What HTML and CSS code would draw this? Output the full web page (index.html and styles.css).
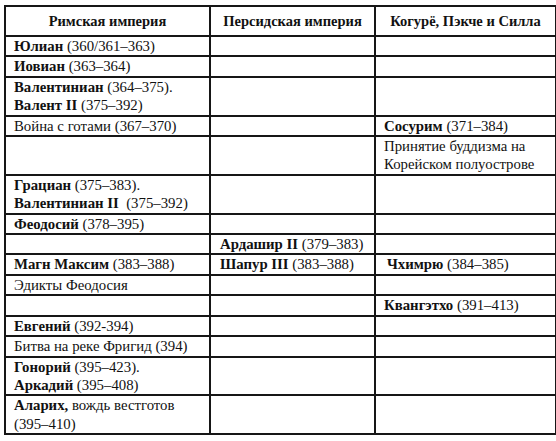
FILE: index.html
```html
<!DOCTYPE html>
<html>
<head>
<meta charset="utf-8">
<link rel="stylesheet" href="styles.css">
</head>
<body>
<table class="chron">
  <colgroup>
    <col class="c1"><col class="c2"><col class="c3">
  </colgroup>
  <thead>
    <tr><th>Римская империя</th><th>Персидская империя</th><th>Когурё, Пэкче и Силла</th></tr>
  </thead>
  <tbody>
    <tr><td><b>Юлиан</b> (360/361–363)</td><td></td><td></td></tr>
    <tr><td><b>Иовиан</b> (363–364)</td><td></td><td></td></tr>
    <tr><td><b>Валентиниан</b> (364–375).<br><b>Валент II</b> (375–392)</td><td></td><td></td></tr>
    <tr><td>Война с готами (367–370)</td><td></td><td class="k"><b>Сосурим</b> (371–384)</td></tr>
    <tr><td></td><td></td><td class="k">Принятие буддизма на<br>Корейском полуострове</td></tr>
    <tr><td><b>Грациан</b> (375–383).<br><b>Валентиниан II</b>&nbsp; (375–392)</td><td></td><td></td></tr>
    <tr><td><b>Феодосий</b> (378–395)</td><td></td><td></td></tr>
    <tr><td></td><td class="p"><b>Ардашир II</b> (379–383)</td><td></td></tr>
    <tr><td><b>Магн Максим</b> (383–388)</td><td class="p"><b>Шапур III</b> (383–388)</td><td class="k ind"><b>Чхимрю</b> (384–385)</td></tr>
    <tr><td>Эдикты Феодосия</td><td></td><td></td></tr>
    <tr><td></td><td></td><td class="k"><b>Квангэтхо</b> (391–413)</td></tr>
    <tr><td><b>Евгений</b> (392-394)</td><td></td><td></td></tr>
    <tr><td>Битва на реке Фригид (394)</td><td></td><td></td></tr>
    <tr><td><b>Гонорий</b> (395–423).<br><b>Аркадий</b> (395–408)</td><td></td><td></td></tr>
    <tr><td><b>Аларих,</b> вождь вестготов<br>(395–410)</td><td></td><td></td></tr>
  </tbody>
</table>
</body>
</html>
```
FILE: styles.css
```css
html, body {
  margin: 0;
  padding: 0;
  background: #fff;
}
body {
  padding: 5px 0 0 4px;
  font-family: "Liberation Serif", "DejaVu Serif", serif;
  color: #111;
}
.chron {
  border-collapse: collapse;
  width: 551px;
  table-layout: fixed;
  font-family: "Liberation Serif", "DejaVu Serif", serif;
  font-size: 14.8px;
}
.c1 { width: 205px; }
.c2 { width: 165px; }
.c3 { width: 181px; }
.chron th, .chron td {
  border: 2px solid #161616;
  padding: 0 8px;
  line-height: 18.4px;
  vertical-align: middle;
  text-align: left;
  font-family: "Liberation Serif", "DejaVu Serif", serif;
}
.chron th {
  height: 28px;
  padding: 0;
  text-align: center;
  font-weight: bold;
  font-size: 14.5px;
}
.chron b { font-weight: bold; }
.chron td.p { padding-left: 9px; }
.chron td.k { padding-left: 8px; }
.chron td.ind { padding-left: 11px; }
```
